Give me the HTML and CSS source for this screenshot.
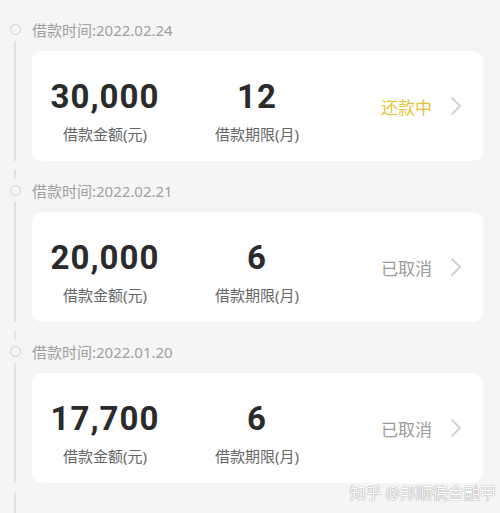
FILE: index.html
```html
<!DOCTYPE html>
<html lang="zh-CN">
<head>
<meta charset="utf-8">
<link rel="stylesheet" href="styles.css">
</head>
<body>
<div class="list">
  <div class="item first">
    <div class="rail"><span class="seg"></span><span class="dot"></span><span class="line"></span></div>
    <div class="main">
      <div class="date">借款时间:2022.02.24</div>
      <div class="card">
        <div class="col"><div class="num">30,000</div><div class="lbl">借款金额(元)</div></div>
        <div class="col"><div class="num">12</div><div class="lbl">借款期限(月)</div></div>
        <div class="status active">还款中</div>
        <svg class="chev" width="12" height="20" viewBox="0 0 12 20"><path d="M2 2 L10 10 L2 18" fill="none" stroke="#d0d0d0" stroke-width="1.8" stroke-linecap="round" stroke-linejoin="round"/></svg>
      </div>
    </div>
  </div>
  <div class="item">
    <div class="rail"><span class="seg"></span><span class="dot"></span><span class="line"></span></div>
    <div class="main">
      <div class="date">借款时间:2022.02.21</div>
      <div class="card">
        <div class="col"><div class="num">20,000</div><div class="lbl">借款金额(元)</div></div>
        <div class="col"><div class="num">6</div><div class="lbl">借款期限(月)</div></div>
        <div class="status">已取消</div>
        <svg class="chev" width="12" height="20" viewBox="0 0 12 20"><path d="M2 2 L10 10 L2 18" fill="none" stroke="#d0d0d0" stroke-width="1.8" stroke-linecap="round" stroke-linejoin="round"/></svg>
      </div>
    </div>
  </div>
  <div class="item">
    <div class="rail"><span class="seg"></span><span class="dot"></span><span class="line"></span></div>
    <div class="main">
      <div class="date">借款时间:2022.01.20</div>
      <div class="card">
        <div class="col"><div class="num">17,700</div><div class="lbl">借款金额(元)</div></div>
        <div class="col"><div class="num">6</div><div class="lbl">借款期限(月)</div></div>
        <div class="status">已取消</div>
        <svg class="chev" width="12" height="20" viewBox="0 0 12 20"><path d="M2 2 L10 10 L2 18" fill="none" stroke="#d0d0d0" stroke-width="1.8" stroke-linecap="round" stroke-linejoin="round"/></svg>
      </div>
    </div>
  </div>
  <div class="item tail">
    <div class="rail"><span class="seg"></span><span class="line"></span></div>
    <div class="main"></div>
  </div>
</div>
<div class="watermark">知乎 @邦顺德金融甲</div>
</body>
</html>
```

FILE: styles.css
```css
html, body {
  margin: 0;
  padding: 0;
  background: #f5f5f5;
  height: 513px;
  overflow: hidden;
}
body {
  font-family: "Noto Sans", "Noto Sans CJK SC", sans-serif;
  position: relative;
}
.list {
  padding-top: 9px;
}
.item {
  display: grid;
  grid-template-columns: 30px 1fr;
  column-gap: 2px;
  padding-bottom: 9px;
}
.rail {
  display: flex;
  flex-direction: column;
  align-items: center;
}
.seg {
  width: 2px;
  height: 9px;
  background: #e0e0e0;
}
.first .seg {
  background: transparent;
}
.dot {
  width: 9px;
  height: 9px;
  border: 1.5px solid #cfcfcf;
  border-radius: 50%;
  margin-top: 6px;
}
.line {
  flex: 1;
  width: 2px;
  background: #e0e0e0;
  margin-top: 6px;
}
.tail {
  height: 21px;
  padding-bottom: 0;
}
.tail .line {
  margin-top: 0;
}
.main {
  width: 451px;
}
.date {
  height: 42px;
  line-height: 42px;
  font-size: 15px;
  color: #a0a0a0;
}
.card {
  height: 110px;
  background: #fff;
  border-radius: 10px;
  display: flex;
  align-items: center;
  padding-left: 10px;
  padding-right: 21px;
  box-sizing: border-box;
}
.col {
  width: 126px;
  margin-right: 26px;
  display: flex;
  flex-direction: column;
  align-items: center;
  margin-top: 10px;
}
.num {
  font-family: Roboto, "Noto Sans", sans-serif;
  font-weight: 700;
  font-size: 33px;
  letter-spacing: 1px;
  line-height: 38px;
  color: #2b2b2b;
}
.lbl {
  font-size: 15px;
  line-height: 20px;
  margin-top: 8px;
  color: #666;
}
.status {
  margin-left: auto;
  font-size: 17px;
  color: #9a9a9a;
}
.status.active {
  color: #e5c43a;
}
.chev {
  margin-left: 18px;
  display: block;
}
.watermark {
  position: absolute;
  right: 4px;
  top: 480px;
  font-size: 16px;
  color: #fff;
  text-shadow: 0 0 1px #999, 0 0 1px #999;
}
```
